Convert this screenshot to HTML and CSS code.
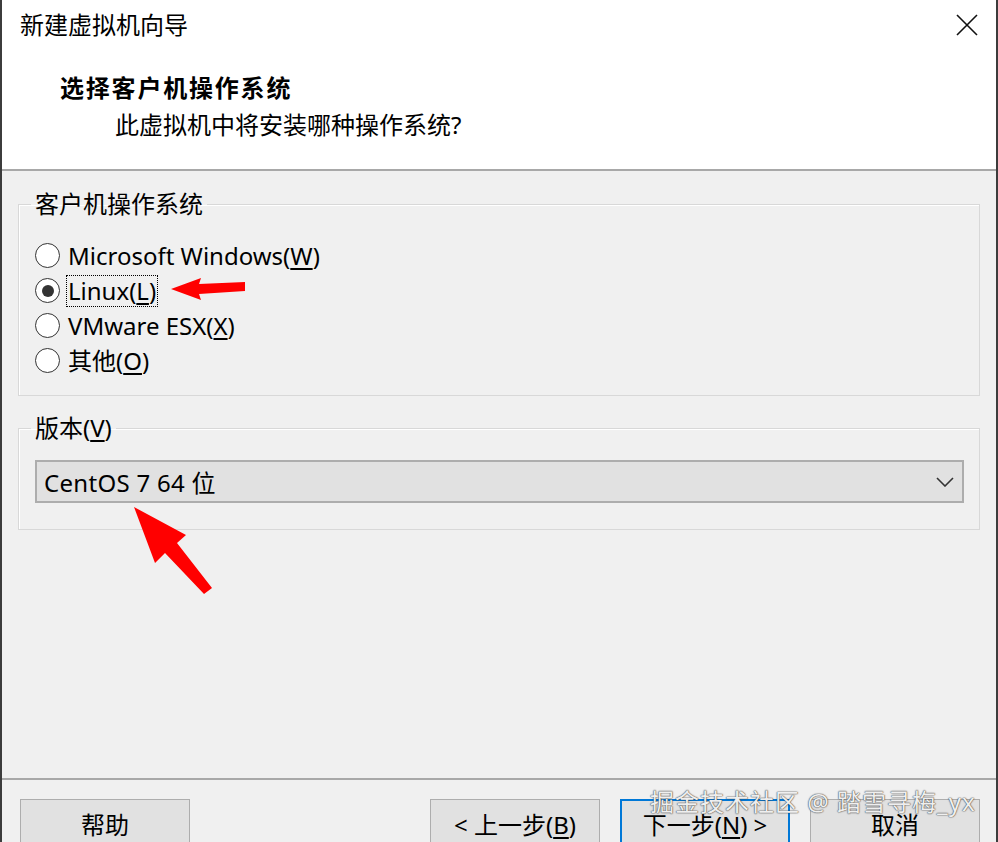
FILE: index.html
```html
<!DOCTYPE html>
<html lang="zh-CN">
<head>
<meta charset="utf-8">
<title>新建虚拟机向导</title>
<link rel="stylesheet" href="styles.css">
</head>
<body>
<div class="window">
  <header class="head">
    <div class="titlebar">
      <span class="title">新建虚拟机向导</span>
      <svg class="close" width="22" height="22" viewBox="0 0 22 22"><path d="M1 1 L21 21 M21 1 L1 21" stroke="#111" stroke-width="1.6" fill="none"/></svg>
    </div>
    <h1 class="heading">选择客户机操作系统</h1>
    <p class="subtitle">此虚拟机中将安装哪种操作系统?</p>
  </header>

  <main class="content">
    <fieldset class="group group-os">
      <legend>客户机操作系统</legend>
      <label class="radio"><span class="circle"></span><span class="rtext">Microsoft Windows(<u>W</u>)</span></label>
      <label class="radio"><span class="circle checked"></span><span class="rtext focus">Linux(<u>L</u>)</span></label>
      <label class="radio"><span class="circle"></span><span class="rtext">VMware ESX(<u>X</u>)</span></label>
      <label class="radio"><span class="circle"></span><span class="rtext">其他(<u>O</u>)</span></label>
    </fieldset>

    <fieldset class="group group-ver">
      <legend>版本(<u>V</u>)</legend>
      <div class="select">
        <span class="seltext">CentOS 7 64 位</span>
        <svg class="chev" width="18" height="10" viewBox="0 0 18 10"><path d="M1 1 L9 9 L17 1" stroke="#333" stroke-width="1.6" fill="none"/></svg>
      </div>
    </fieldset>
  </main>

  <footer class="foot">
    <button class="btn">帮助</button>
    <button class="btn push">&lt; 上一步(<u>B</u>)</button>
    <button class="btn primary">下一步(<u>N</u>) &gt;</button>
    <button class="btn">取消</button>
  </footer>

  <svg class="arrow arrow-left" width="80" height="26" viewBox="168 278 80 26"><polygon points="171,289 201,278 199,284 245,282 245,291 199,294 201,300" fill="#f00"/></svg>
  <svg class="arrow arrow-up" width="90" height="95" viewBox="130 503 90 95"><polygon points="134,507 186,535 177,543 212,588 204,594 165,553 155,563" fill="#f00"/></svg>
  <div class="watermark">掘金技术社区 @ 踏雪寻梅_yx</div>
</div>
</body>
</html>
```

FILE: styles.css
```css
* { box-sizing: border-box; }
html, body { margin: 0; padding: 0; }
body {
  width: 998px;
  height: 842px;
  overflow: hidden;
  background: #f0f0f0;
  font-family: "Noto Sans", "Noto Sans CJK SC", sans-serif;
  font-size: 24px;
  color: #000;
}
.window {
  position: relative;
  width: 998px;
  height: 842px;
  border-left: 2px solid #3c3c3c;
  border-right: 2px solid #3c3c3c;
  display: flex;
  flex-direction: column;
  background: #f0f0f0;
}
.head {
  background: #fff;
  height: 171px;
  border-bottom: 2px solid #a8a8a8;
  padding: 9px 0 0 0;
  flex: none;
}
.titlebar {
  display: flex;
  align-items: center;
  justify-content: space-between;
  padding: 0 18px 0 18px;
  height: 32px;
}
.title { font-size: 24px; line-height: 32px; }
.close { display: block; }
.heading {
  margin: 31px 0 0 58px;
  font-size: 24px;
  line-height: 32px;
  font-weight: 700;
  letter-spacing: 1.8px;
}
.subtitle {
  margin: 5px 0 0 113px;
  font-size: 24px;
  line-height: 32px;
}
.content {
  flex: 1;
  padding: 17px 16px 0 16px;
}
.group {
  margin: 0;
  border: 1px solid #d8d8d8;
  box-shadow: inset 1px 1px 0 #fff;
  padding: 0 15px 0 16px;
}
.group legend {
  padding: 0 4px;
  margin-left: -4px;
  font-size: 24px;
  line-height: 32px;
}
.group-os { padding-top: 18px; padding-bottom: 17px; }
.group-ver { margin-top: 16px; padding-top: 16px; padding-bottom: 26px; }
.radio {
  display: flex;
  align-items: center;
  height: 35px;
}
.circle {
  width: 25px;
  height: 25px;
  border: 1.5px solid #333;
  border-radius: 50%;
  background: #fff;
  flex: none;
  display: flex;
  align-items: center;
  justify-content: center;
}
.circle.checked::after {
  content: "";
  width: 12px;
  height: 12px;
  border-radius: 50%;
  background: #333;
}
.rtext {
  margin-left: 6px;
  line-height: 30px;
  padding: 0 1px;
  border: 1px solid transparent;
  font-size: 24px;
}
.rtext.focus { border: 1px dotted #000; }
u { text-decoration-thickness: 1.5px; text-underline-offset: 3px; }
.select {
  height: 43px;
  background: #e1e1e1;
  border: 2px solid #adadad;
  display: flex;
  align-items: center;
  justify-content: space-between;
  padding: 0 8px 0 7px;
}
.seltext { font-size: 24px; letter-spacing: 0.3px; }
.chev { display: block; }
.foot {
  flex: none;
  height: 64px;
  border-top: 2px solid #a8a8a8;
  padding: 19px 16px 0 18px;
  display: flex;
  align-items: flex-start;
  gap: 20px;
}
.btn {
  width: 170px;
  height: 48px;
  background: #e1e1e1;
  border: 1px solid #adadad;
  font-family: inherit;
  font-size: 24px;
  color: #000;
  padding: 0;
}
.btn.push { margin-left: auto; }
.btn.primary { border: 2px solid #0078d7; }
.arrow { position: absolute; }
.arrow-left { left: 166px; top: 278px; }
.arrow-up { left: 128px; top: 503px; }
.watermark {
  position: absolute;
  left: 648px;
  top: 786px;
  font-size: 24px;
  line-height: 32px;
  letter-spacing: 1px;
  color: rgba(255,255,255,0.92);
  text-shadow: 0 0 1px #555, 0 0 1px #555, 0 0 2px rgba(0,0,0,.4);
  white-space: nowrap;
}
```
